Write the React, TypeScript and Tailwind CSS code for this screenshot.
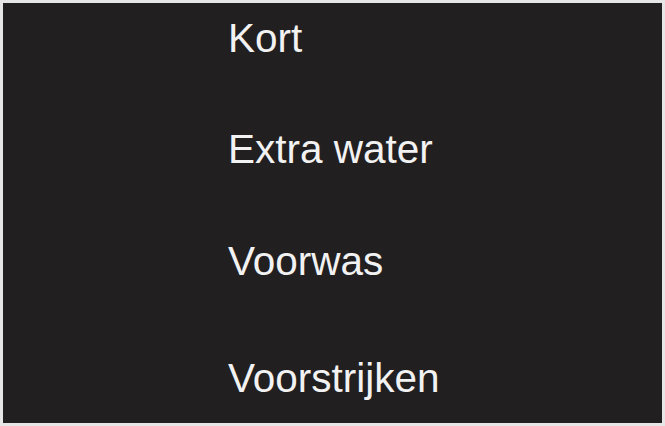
export default function App() {
  const cls = "text-[40.5px] leading-[40px] text-[#f2f2f2]";
  return (
    <div className="w-[665px] h-[426px] bg-[#e6e6e6] p-[3px] font-['Liberation_Sans',Arial,sans-serif]">
      <div className="w-full h-full bg-[#221f20] pl-[225px] pt-[15px] flex flex-col">
        <div className={cls}>Kort</div>
        <div className={`${cls} mt-[71px]`}>Extra water</div>
        <div className={`${cls} mt-[72px]`}>Voorwas</div>
        <div className={`${cls} mt-[77px]`}>Voorstrijken</div>
      </div>
    </div>
  );
}
